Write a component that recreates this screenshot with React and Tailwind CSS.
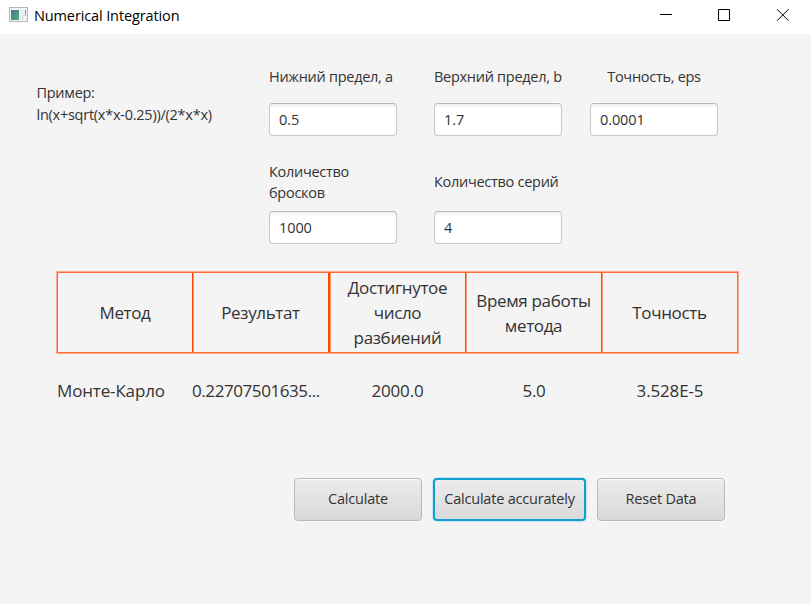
function Field({ value, className = "" }) {
  return (
    <input
      readOnly
      value={value}
      className={`block h-[33px] w-32 rounded-[4px] border border-[#c8c8c8] border-t-[#b8b8b8] bg-linear-to-b from-[#efefef] to-white to-[5px] px-[9px] pb-px text-[14.5px] tracking-[-0.1px] text-[#333] outline-none ${className}`}
    />
  );
}

function Line({ children, className = "" }) {
  return <span className={`block whitespace-nowrap ${className}`}>{children}</span>;
}

function TitleBar() {
  return (
    <header className="flex h-[34px] items-start bg-white text-black">
      <svg className="mt-[7px] ml-[9px] h-4 w-[19px]" viewBox="0 0 19 16">
        <defs>
          <linearGradient id="app-icon" x1="0" y1="0" x2="1" y2="1">
            <stop offset="0" stopColor="#4672a0" />
            <stop offset="1" stopColor="#51b06c" />
          </linearGradient>
          <linearGradient id="app-strip" x1="0" y1="0" x2="0" y2="1">
            <stop offset="0" stopColor="#4c8f8c" />
            <stop offset="1" stopColor="#7fc79a" />
          </linearGradient>
        </defs>
        <rect x="0.5" y="0.5" width="18" height="14" fill="#f4f5f7" stroke="#b3b6bc" />
        <rect x="2" y="3" width="8" height="10" fill="url(#app-icon)" />
        <rect x="11" y="3" width="4" height="10" fill="#e9ecef" />
        <rect x="16" y="3" width="1" height="6" fill="url(#app-strip)" />
      </svg>
      <h1 className="mt-[6px] ml-[6px] text-[14.5px] leading-5 tracking-[-0.12px] whitespace-nowrap">
        Numerical Integration
      </h1>
      <svg className="mt-[9px] mr-[22px] ml-auto h-3 w-[130px]" viewBox="0 0 130 12" fill="none" stroke="#000">
        <path d="M1 5.500h12" />
        <path d="M59.500 0.500h11v11h-11z" />
        <path d="M118 0.200l11.600 11.600M129.600 0.200l-11.600 11.600" />
      </svg>
    </header>
  );
}

function Inputs() {
  return (
    <section className="flex h-[211px] pt-8 pl-[36.5px] text-[14.5px] leading-[21px] tracking-[-0.28px]">
      <div className="w-[232.500px] pt-4 leading-[22px]">
        <Line>Пример:</Line>
        <Line className="tracking-[-0.25px]">ln(x+sqrt(x*x-0.25))/(2*x*x)</Line>
      </div>
      <div className="w-[165px]">
        <Line>Нижний предел, a</Line>
        <Field value="0.5" className="mt-4" />
        <div className="mt-[25px]">
          <Line>Количество</Line>
          <Line>бросков</Line>
        </div>
        <Field value="1000" className="mt-2" />
      </div>
      <div className="w-[156px]">
        <Line>Верхний предел, b</Line>
        <Field value="1.7" className="mt-4" />
        <Line className="mt-[35px]">Количество серий</Line>
        <Field value="4" className="mt-[19px]" />
      </div>
      <div className="w-32">
        <Line className="text-center">Точность, eps</Line>
        <Field value="0.0001" className="mt-4" />
      </div>
    </section>
  );
}

const columns = [
  ["Метод"],
  ["Результат"],
  ["Достигнутое", "число", "разбиений"],
  ["Время работы", "метода"],
  ["Точность"],
];

const dividers = [
  "border-r shadow-[1px_0_0_#ff9a73]",
  "border-r-2 shadow-[1px_0_0_#ff9a73]",
  "border-r shadow-[1px_0_0_#ff9a73]",
  "border-r shadow-[1px_0_0_#ff9a73]",
  "",
];

function Results() {
  return (
    <section className="mt-[27px] ml-[57px] w-[681px] text-[17px] tracking-[-0.35px]">
      <div className="grid h-[81px] grid-cols-[135px_137px_136px_136px_135px] border border-[#ff6b35] shadow-[0_0_0_1px_#ffa888]">
        {columns.map((lines, index) => (
          <div
            key={lines[0]}
            className={`flex flex-col items-center justify-center border-[#ff4500] leading-[25px] ${dividers[index]}`}
          >
            {lines.map((line) => (
              <Line key={line}>{line}</Line>
            ))}
          </div>
        ))}
      </div>
      <div className="mt-[25px] grid h-[26px] grid-cols-[136px_136px_137px_136px_136px] text-center leading-[25px]">
        <Line className="text-left tracking-[-0.15px]">Монте-Карло</Line>
        <Line className="-ml-px text-left tracking-[-0.42px]">0.22707501635...</Line>
        <Line className="tracking-[-0.2px]">2000.0</Line>
        <Line>5.0</Line>
        <Line className="tracking-[-0.15px]">3.528E-5</Line>
      </div>
    </section>
  );
}

function Button({ children, className }) {
  return (
    <button
      className={`h-[43px] rounded-[4px] bg-linear-to-b from-[#ececec] to-[#d9d9d9] pb-px text-[14.5px] tracking-[-0.2px] whitespace-nowrap ${className}`}
    >
      {children}
    </button>
  );
}

export default function App() {
  return (
    <div className="h-[604px] w-[811px] overflow-hidden bg-[#f4f4f4] font-['Open_Sans','Noto_Sans',sans-serif] text-[#333]">
      <TitleBar />
      <Inputs />
      <Results />
      <div className="mt-[74px] ml-[294px] flex">
        <Button className="w-32 border border-[#b9b9b9] shadow-[inset_0_1px_0_#f8f8f8]">Calculate</Button>
        <Button className="ml-[11px] w-[153px] border-2 border-[#109fd0] shadow-[0_0_1px_1px_#c5e6f1]">
          Calculate accurately
        </Button>
        <Button className="ml-[11px] w-32 border border-[#b9b9b9] shadow-[inset_0_1px_0_#f8f8f8]">Reset Data</Button>
      </div>
    </div>
  );
}
